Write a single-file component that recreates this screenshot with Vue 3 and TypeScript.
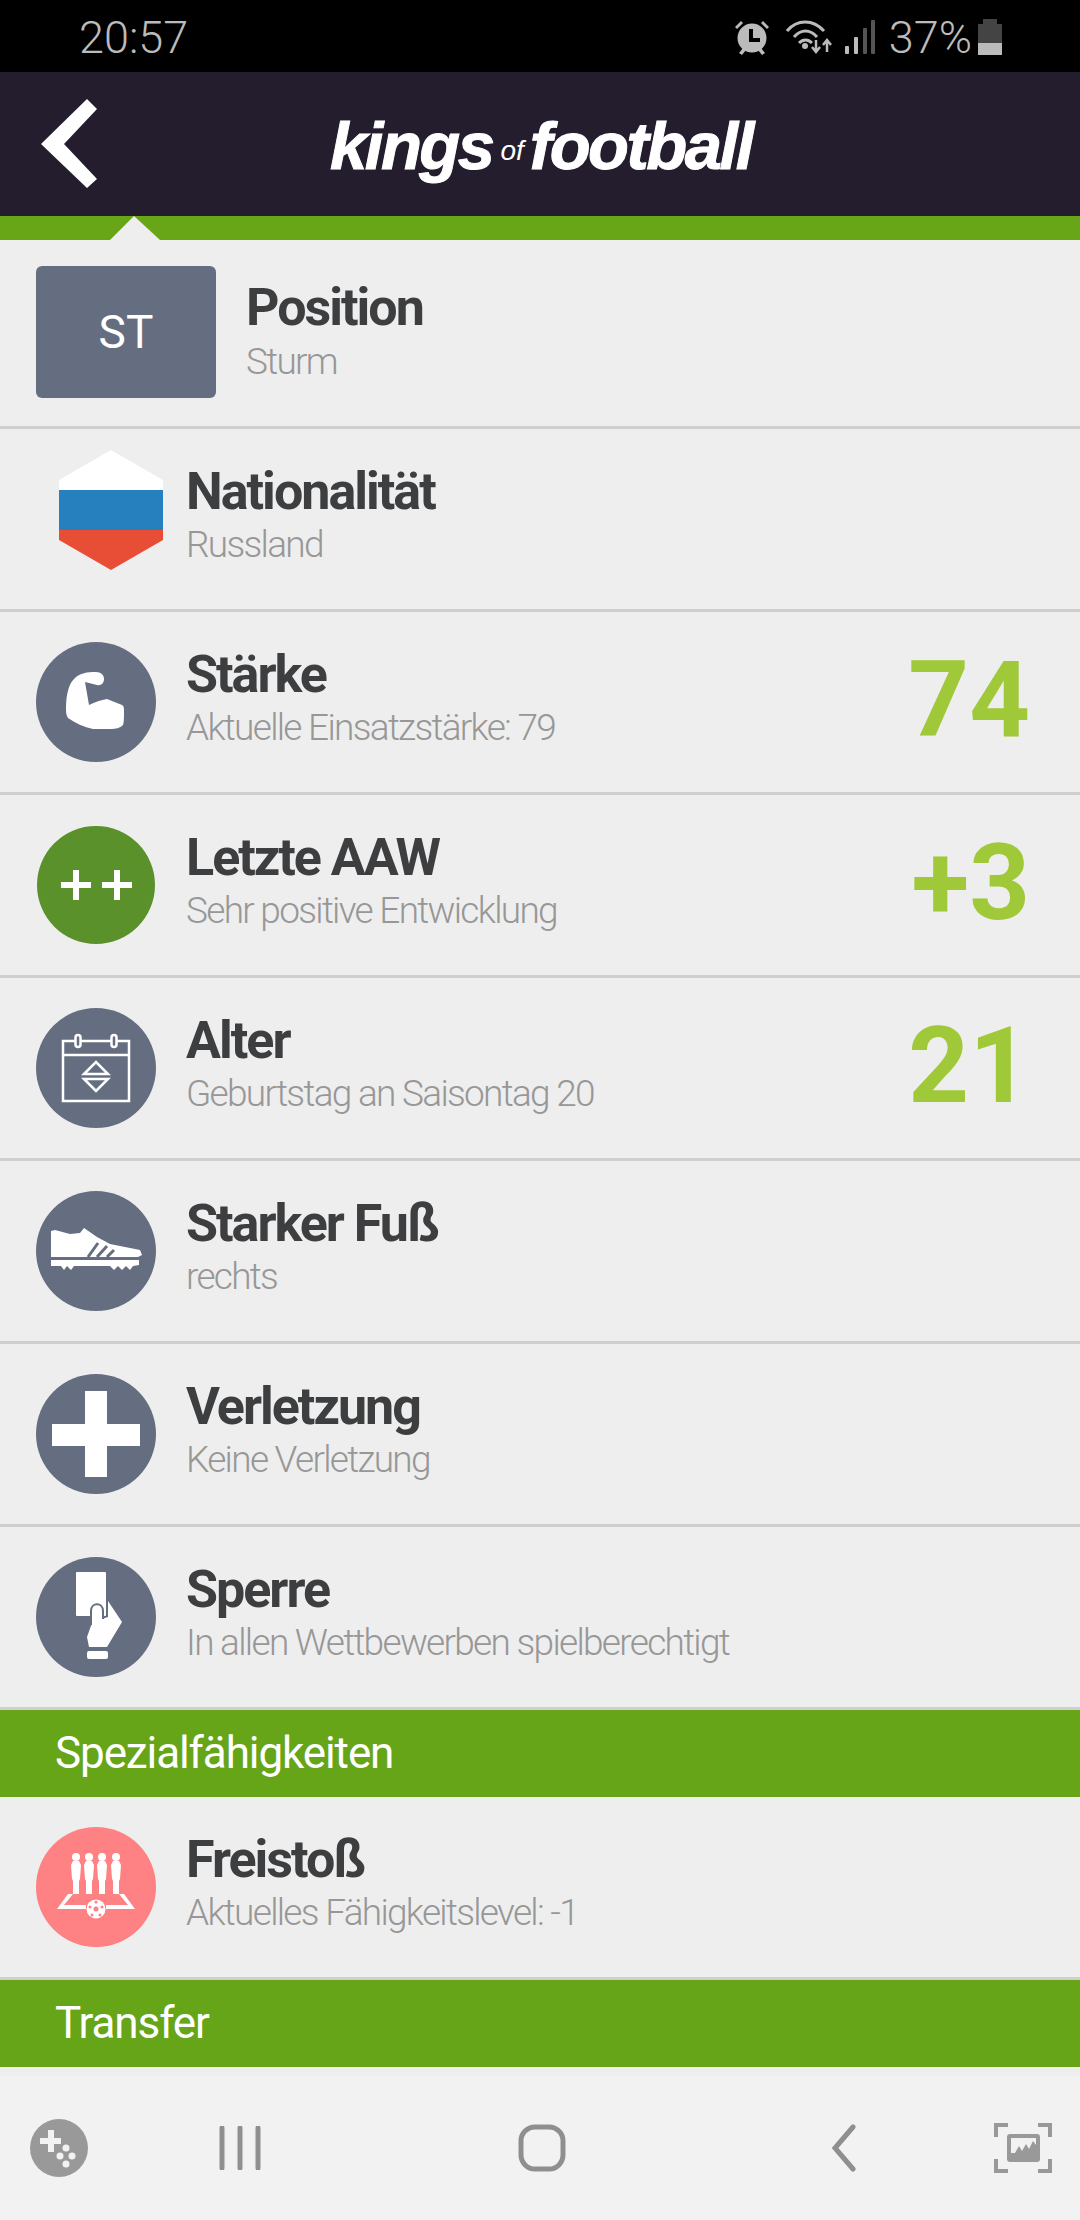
<script setup lang="ts">
  /**
   * Player Row Interface
   */
  interface PlayerRow {
    icon: string
    title: string
    text: string
    value?: string
  }

  const rows: PlayerRow[] = [
    { icon: 'muscle', title: 'Stärke', text: 'Aktuelle Einsatzstärke: 79', value: '74' },
    { icon: 'plus', title: 'Letzte AAW', text: 'Sehr positive Entwicklung', value: '+3' },
    { icon: 'calendar', title: 'Alter', text: 'Geburtstag an Saisontag 20', value: '21' },
    { icon: 'shoe', title: 'Starker Fuß', text: 'rechts' },
    { icon: 'cross', title: 'Verletzung', text: 'Keine Verletzung' },
    { icon: 'card', title: 'Sperre', text: 'In allen Wettbewerben spielberechtigt' },
  ]
</script>

<template>
  <div class="page">
    <div class="status">
      <span class="time">20:57</span>
      <div class="status-right">
        <svg class="alarm" width="36" height="36" viewBox="0 0 36 36">
          <circle cx="18" cy="19" r="14.5" fill="#bbb" />
          <path d="M15 10h4v9h7v4H15z" fill="#000" />
          <path d="M1 8l6-6 2 2-6 6zM35 8l-6-6-2 2 6 6z" fill="#bbb" />
          <path d="M5 34l4-5 3 2-4 5zM31 34l-4-5-3 2 4 5z" fill="#bbb" />
        </svg>
        <svg class="wifi" width="47" height="36" viewBox="0 0 47 36">
          <g fill="none" stroke="#bbb" stroke-width="3">
            <path d="M2 12C12 0 28 0 39 12" />
            <path d="M9 18C16 10 25 10 32 18" />
            <path d="M14 24C18 20 23 20 27 24" />
          </g>
          <circle cx="20" cy="27" r="3" fill="#bbb" />
          <path d="M31 21v10M27 28l4 5 4-5M42 33V22M38 26l4-5 4 5" fill="none" stroke="#bbb" stroke-width="2.5" />
        </svg>
        <svg class="signal" width="30" height="34" viewBox="0 0 30 34">
          <rect x="0" y="26" width="4" height="8" rx="1" fill="#bbb" />
          <rect x="9" y="17" width="4" height="17" rx="1" fill="#bbb" />
          <rect x="18" y="8" width="4" height="26" rx="1" fill="#555" />
          <rect x="26" y="0" width="4" height="34" rx="1" fill="#555" />
        </svg>
        <span class="percent">37%</span>
        <svg class="battery" width="24" height="36" viewBox="0 0 24 36">
          <rect x="5" y="0" width="14" height="6" fill="#444" />
          <rect x="0" y="5" width="24" height="19" fill="#444" />
          <rect x="0" y="24" width="24" height="12" fill="#bbb" />
        </svg>
      </div>
    </div>

    <header class="header">
      <svg class="back" width="56" height="89" viewBox="0 0 56 89">
        <path d="M0 45L46 0l10 10-33 35 33 35-10 9z" fill="#fff" />
      </svg>
      <div class="logo"><span>kings</span><span class="logo-of">of</span><span>football</span></div>
    </header>

    <div class="tab-strip">
      <svg class="notch" width="50" height="24" viewBox="0 0 50 24">
        <path d="M0 24L24 0l26 24z" fill="#eee" />
      </svg>
    </div>

    <div class="row row-first">
      <div class="position-box">ST</div>
      <div class="row-text position-text">
        <div class="row-title">Position</div>
        <div class="row-sub">Sturm</div>
      </div>
    </div>

    <div class="row">
      <svg class="flag" width="104" height="120" viewBox="0 0 104 120">
        <path d="M52 0L104 30V40H0V30z" fill="#fff" />
        <rect y="40" width="104" height="40" fill="#2580bd" />
        <path d="M0 80H104V90L52 120 0 90z" fill="#e84e36" />
      </svg>
      <div class="row-text">
        <div class="row-title">Nationalität</div>
        <div class="row-sub">Russland</div>
      </div>
    </div>

    <div v-for="row in rows" :key="row.title" class="row">
      <svg v-if="row.icon === 'muscle'" class="icon" width="120" height="120" viewBox="0 0 120 120">
        <circle cx="60" cy="60" r="60" fill="#656e80" />
        <path d="M30 66C30 52 33 41 39 36C44 31 51 30 60 30C65 30 68 33 68 37C68 41 65 44 61 43C57 42 53 41 49 40L53 63C59 60 65 58 71 57L86 63C88 64 88 66 88 70C88 75 88 80 87 83C84 86 80 87 74 87L57 87C48 85 39 81 32 76C30 73 30 70 30 66z" fill="#fff" />
      </svg>
      <svg v-else-if="row.icon === 'plus'" class="icon" width="120" height="120" viewBox="0 0 120 120">
        <circle cx="60" cy="60" r="59" fill="#5b912b" />
        <path d="M37 45h6v12h12v6H43v12h-6V63H25v-6h12zM78 45h6v12h12v6H84v12h-6V63H66v-6h12z" fill="#fff" />
      </svg>
      <svg v-else-if="row.icon === 'calendar'" class="icon" width="120" height="120" viewBox="0 0 120 120">
        <circle cx="60" cy="60" r="60" fill="#656e80" />
        <g fill="none" stroke="#fff" stroke-width="2.500">
          <path d="M39 33H27V93H93V33H81M45 33H75M27 47H93" />
          <rect x="39.5" y="27" width="5" height="12" rx="2.5" />
          <rect x="75.500" y="27" width="5" height="12" rx="2.5" />
          <path d="M48 66L60 54 72 66zM48 71L60 83 72 71z" />
        </g>
      </svg>
      <svg v-else-if="row.icon === 'shoe'" class="icon" width="120" height="120" viewBox="0 0 120 120">
        <circle cx="60" cy="60" r="60" fill="#656e80" />
        <path d="M15 40L19 39 34 43 44 42 48 37 61 46 74 53 104 59 106 64 102 66H15z" fill="#fff" />
        <path d="M15 69H103V74L97 75 94 79 90 75 86 79 82 75 78 79 74 75H38L35 79 31 75 28 79 25 75H15z" fill="#fff" />
        <path d="M52 66L62 52M61 66L71 55M71 66L78 59" fill="none" stroke="#656e80" stroke-width="3" />
      </svg>
      <svg v-else-if="row.icon === 'cross'" class="icon" width="120" height="120" viewBox="0 0 120 120">
        <circle cx="60" cy="60" r="60" fill="#656e80" />
        <path d="M49 17H71V50H104V72H71V103H49V72H16V50H49z" fill="#fff" />
      </svg>
      <svg v-else class="icon" width="120" height="120" viewBox="0 0 120 120">
        <circle cx="60" cy="60" r="60" fill="#656e80" />
        <rect x="40" y="15" width="30" height="44" rx="1" fill="#fff" />
        <path d="M72 44L86 65 71 90H53L51 80 56 66V54C56 46 66 46 66 54V62L72 60z" fill="#fff" />
        <path d="M55 68V54C55 45 67 45 67 54V62" fill="none" stroke="#656e80" stroke-width="2" />
        <rect x="51" y="94" width="21" height="8" rx="2" fill="#fff" />
      </svg>
      <div class="row-text">
        <div class="row-title">{{ row.title }}</div>
        <div class="row-sub">{{ row.text }}</div>
      </div>
      <div v-if="row.value" class="row-value">{{ row.value }}</div>
    </div>

    <div class="section">Spezialfähigkeiten</div>

    <div class="row">
      <svg class="icon" width="120" height="120" viewBox="0 0 120 120">
        <circle cx="60" cy="60" r="60" fill="#fe8183" />
        <g fill="#fff">
          <g v-for="x in [40, 53, 66, 80]" :key="x">
            <circle :cx="x" cy="30" r="4" />
            <path :d="`M${x - 3} 34H${x + 3}L${x + 5} 38L${x + 4} 52L${x + 3} 54V67H${x - 3}V54L${x - 4} 52L${x - 5} 38z`" />
          </g>
          <path d="M32 67H37L28 78H50V82H21zM88 67H83L92 78H70V82H99z" />
          <circle cx="60" cy="82" r="9.500" />
        </g>
        <g fill="#fe8183">
          <circle cx="60" cy="82" r="2.500" />
          <circle cx="60" cy="75" r="1.500" />
          <circle cx="54" cy="80" r="1.500" />
          <circle cx="66" cy="80" r="1.500" />
          <circle cx="56" cy="88" r="1.500" />
          <circle cx="64" cy="88" r="1.500" />
        </g>
      </svg>
      <div class="row-text">
        <div class="row-title">Freistoß</div>
        <div class="row-sub">Aktuelles Fähigkeitslevel: -1</div>
      </div>
    </div>

    <div class="section">Transfer</div>
    <div class="nav-gap"></div>

    <nav class="nav">
      <svg class="nav-game" width="58" height="58" viewBox="0 0 58 58">
        <circle cx="29" cy="29" r="29" fill="#999" />
        <path d="M18 11h6v8h7v6h-7v8h-6v-8h-8v-6h8z" fill="#f2f2f2" />
        <circle cx="36" cy="29" r="3.500" fill="#f2f2f2" />
        <circle cx="30" cy="37" r="3.500" fill="#f2f2f2" />
        <circle cx="42" cy="37" r="3.500" fill="#f2f2f2" />
        <circle cx="36" cy="45" r="3.500" fill="#f2f2f2" />
      </svg>
      <svg class="nav-recents" width="42" height="44" viewBox="0 0 42 44">
        <path d="M3 2V42M21 2V42M39 2V42" fill="none" stroke="#8f8f8f" stroke-width="5" stroke-linecap="round" />
      </svg>
      <svg class="nav-home" width="48" height="48" viewBox="0 0 48 48">
        <rect x="3" y="3" width="42" height="42" rx="14" fill="none" stroke="#8f8f8f" stroke-width="5" />
      </svg>
      <svg class="nav-back" width="34" height="48" viewBox="0 0 34 48">
        <path d="M27 3L9 24l18 21" fill="none" stroke="#8f8f8f" stroke-width="5" stroke-linecap="round" />
      </svg>
      <svg class="nav-shot" width="58" height="50" viewBox="0 0 58 50">
        <path d="M14 2H2V14M44 2H56V14M14 48H2V36M44 48H56V36" fill="none" stroke="#999" stroke-width="4" />
        <rect x="13" y="11" width="33" height="28" rx="3" fill="#999" />
        <path d="M17 15H42V22L39 18 35 26 32 21 28 28 25 23 21 30 17 30z" fill="#f2f2f2" />
      </svg>
    </nav>
  </div>
</template>

<style scoped>
  .page {
    width: 1080px;
    height: 2220px;
    background-color: rgb(238, 238, 238);
    font-family: Roboto, "Noto Sans", sans-serif;
    overflow: hidden;
  }

  .status {
    display: flex;
    justify-content: space-between;
    align-items: center;
    height: 72px;
    padding: 2px 78px 0 79px;
    box-sizing: border-box;
    background-color: #000;
    color: #bbb;
    font-size: 45px;
    font-weight: 300;
  }

  .status-right {
    display: flex;
    align-items: center;
  }

  .wifi {
    margin-left: 15px;
  }

  .signal {
    margin-left: 13px;
  }

  .percent {
    margin-left: 14px;
  }

  .battery {
    margin-left: 6px;
  }

  .header {
    display: flex;
    align-items: center;
    height: 144px;
    background-color: #241d2e;
  }

  .back {
    margin-left: 41px;
    margin-top: -2px;
  }

  .logo {
    display: flex;
    align-items: baseline;
    margin-left: 233px;
    margin-top: 2px;
    color: #fff;
    font-family: "Liberation Sans", Arial, sans-serif;
    font-size: 67px;
    font-style: italic;
    font-weight: 700;
    letter-spacing: -2.500px;
    -webkit-text-stroke: 1px #fff;
  }

  .logo-of {
    margin: 0 6px 0 8px;
    font-size: 28px;
    font-weight: 400;
    letter-spacing: 0;
    -webkit-text-stroke: 0;
    transform: translateY(-9px);
  }

  .tab-strip {
    display: flex;
    height: 24px;
    padding-left: 110px;
    background-color: #68a618;
  }

  .row {
    display: flex;
    align-items: center;
    height: 183px;
    padding-left: 36px;
    box-sizing: border-box;
    border-bottom: 3px solid #cfcfcf;
  }

  .row-first {
    height: 189px;
  }

  .position-box {
    display: flex;
    justify-content: center;
    align-items: center;
    flex: none;
    width: 180px;
    height: 132px;
    margin: 0 30px 2px 0;
    border-radius: 6px;
    background-color: #656e80;
    color: #fff;
    font-size: 46px;
    font-weight: 400;
  }

  .flag {
    flex: none;
    margin: 0 23px 18px 23px;
  }

  .icon {
    flex: none;
    margin-right: 30px;
  }

  .row-text {
    flex: 1;
    margin-top: -3px;
  }

  .position-text {
    margin-top: 2px;
  }

  .position-text .row-sub {
    margin-top: 1px;
  }

  .row-title {
    color: #3d3e40;
    font-size: 52px;
    font-weight: 700;
    line-height: 53px;
    letter-spacing: -2px;
  }

  .row-sub {
    color: #979797;
    font-size: 37px;
    font-weight: 300;
    line-height: 53px;
    letter-spacing: -1.700px;
  }

  .row-value {
    margin-right: 50px;
    color: #a0c93a;
    font-size: 106px;
    font-weight: 700;
    line-height: 1;
    margin-top: -4px;
  }

  .section {
    height: 87px;
    padding-left: 55px;
    background-color: #66a518;
    color: #fff;
    font-size: 44px;
    font-weight: 400;
    line-height: 87px;
    letter-spacing: -1.100px;
  }

  .nav-gap {
    height: 9px;
  }

  .nav {
    display: flex;
    align-items: center;
    height: 144px;
    padding-left: 30px;
    background-color: #f2f2f2;
  }

  .nav-recents {
    margin-left: 131px;
  }

  .nav-home {
    margin-left: 257px;
  }

  .nav-back {
    margin-left: 260px;
  }

  .nav-shot {
    margin-left: 134px;
  }
</style>
